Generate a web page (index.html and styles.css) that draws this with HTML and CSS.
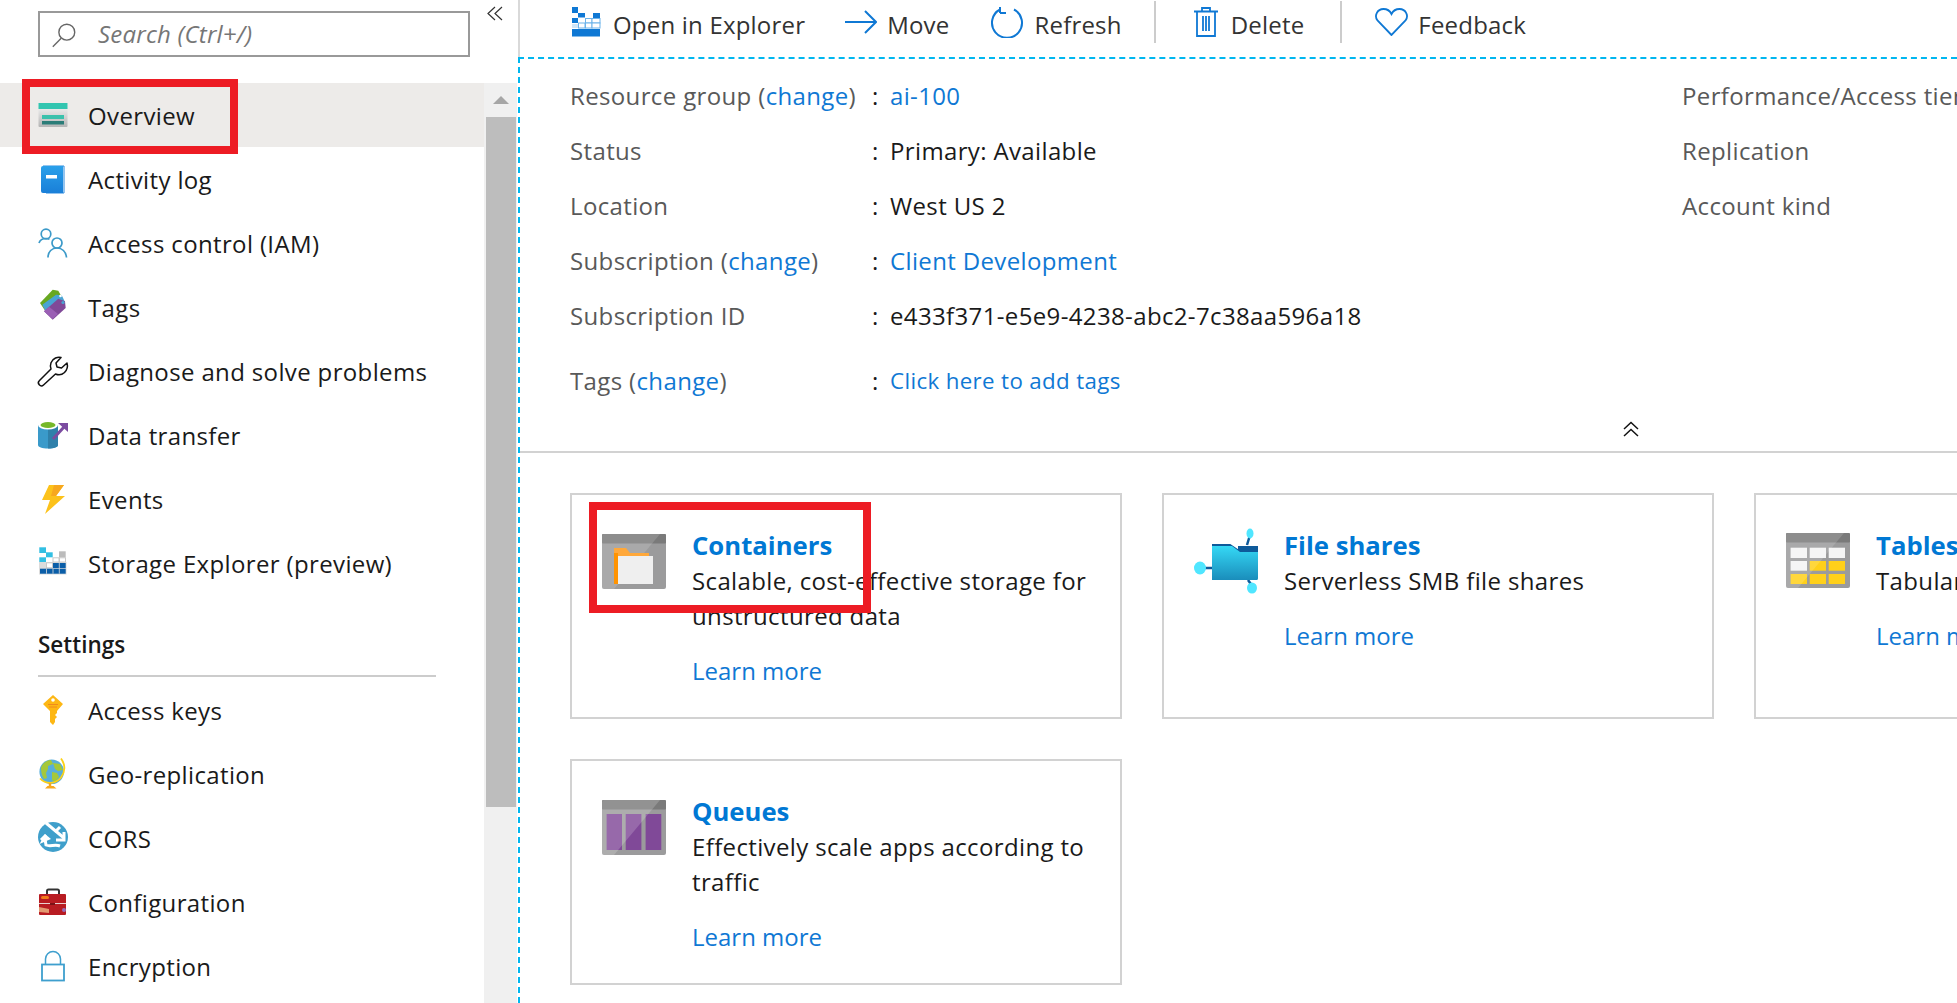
FILE: index.html
```html
<!DOCTYPE html>
<html lang="en">
<head>
<meta charset="utf-8">
<title>Storage account overview</title>
<link rel="stylesheet" href="styles.css">
</head>
<body>
<svg class="defs" width="0" height="0" aria-hidden="true">
  <defs>
    <linearGradient id="gBook" x1="0" y1="0" x2="0" y2="1"><stop offset="0" stop-color="#2aa0ea"/><stop offset="1" stop-color="#1a7fd8"/></linearGradient>
    <linearGradient id="gFolder" x1="0" y1="0" x2="0" y2="1"><stop offset="0" stop-color="#35d8f5"/><stop offset="1" stop-color="#1a8dbb"/></linearGradient>
    <linearGradient id="gOverview" x1="0" y1="0" x2="0" y2="1"><stop offset="0" stop-color="#fafafa"/><stop offset="1" stop-color="#b5b5b5"/></linearGradient>
  </defs>
</svg>
<div class="page">
  <aside class="sidebar">
    <div class="sidebar-top">
      <div class="search">
        <svg class="search-icon" viewBox="0 0 30 30" width="30" height="30"><circle cx="18" cy="12" r="8.5" fill="none" stroke="#666" stroke-width="1.5"/><path d="M12 18.5 3 27.5" stroke="#666" stroke-width="1.5" fill="none"/></svg>
        <span class="search-text">Search (Ctrl+/)</span>
      </div>
      <svg class="collapse" viewBox="0 0 16 16" width="16" height="16"><path d="M8 1 1 7.5 8 14M15 1 8 7.5 15 14" fill="none" stroke="#333" stroke-width="1.2"/></svg>
    </div>
    <div class="sidebar-body">
      <nav class="nav">
        <a class="nav-item selected">
          <span class="highlight-nav"></span>
          <svg class="nav-icon" viewBox="0 0 30 30"><rect x="0.5" y="3" width="29" height="24" rx="1" fill="url(#gOverview)"/><rect x="0.5" y="3" width="29" height="6" fill="#32c5b0"/><rect x="4" y="15" width="22" height="4" fill="#3ac1ac"/><rect x="4" y="21" width="22" height="3.5" fill="#2b7d78"/></svg>
          <span>Overview</span>
        </a>
        <a class="nav-item">
          <svg class="nav-icon" viewBox="0 0 30 30"><path d="M5 2h21v27H8" fill="none" stroke="#2a8adf" stroke-width="1"/><path d="M3 4a2 2 0 0 1 2-2h20v27H5a2 2 0 0 1-2-2z" fill="url(#gBook)"/><rect x="8" y="11" width="11" height="3.5" fill="#fff"/></svg>
          <span>Activity log</span>
        </a>
        <a class="nav-item">
          <svg class="nav-icon" viewBox="0 0 30 30"><g fill="none" stroke="#3c9ac9" stroke-width="1.7"><circle cx="8" cy="6" r="4.8"/><circle cx="19" cy="15" r="5"/><path d="M1 15c1-3 3-4.500 7-4.500 1.500 0 2.500.3 3.500.8"/><path d="M10 29.500c0-6 4-9.500 9-9.500s9 3.500 9.500 9.500"/></g></svg>
          <span>Access control (IAM)</span>
        </a>
        <a class="nav-item">
          <svg class="nav-icon" viewBox="0 0 30 30"><path d="M2 11 14.700-2.300l5.600 1 4 7L8 20z" fill="#68a820"/><path d="M4.300 12.700 18 2.700l5.700.6L27 10 9 22z" fill="#49a4d4"/><path d="M6 19.300 20.300 6.700l6.700 2.600.7 6.700-13 11.700z" fill="#804998"/><path d="M6 19.300 14.700 27 20 22 11 14.800z" fill="#9a5fb4"/><circle cx="25" cy="10.500" r="1.600" fill="#49a4d4"/><circle cx="22.500" cy="4" r="1.300" fill="#fff"/></svg>
          <span>Tags</span>
        </a>
        <a class="nav-item">
          <svg class="nav-icon" viewBox="0 0 30 30"><path d="M1.500 24.500 13 13c-1.500-4 0-9 4.500-11 2-.9 4-1 5.500-.5l-5 5.500 1 4 4.500 1L29 7c1 3.500 0 7-2.500 9.500-2.500 2.300-6 2.800-9 1.500L5.500 29a2.800 2.800 0 0 1-4-4.500z" fill="none" stroke="#111" stroke-width="1.500" stroke-linejoin="round"/></svg>
          <span>Diagnose and solve problems</span>
        </a>
        <a class="nav-item">
          <svg class="nav-icon" viewBox="0 0 30 30"><path d="M0 5v20c0 2 4 3.500 10 3.500s10-1.500 10-3.500V5z" fill="#3a9aca"/><path d="M10 8v20.500c6 0 10-1.500 10-3.500V5z" fill="#2f80aa"/><ellipse cx="10" cy="5" rx="10" ry="4.500" fill="#fff"/><ellipse cx="10" cy="5" rx="7.500" ry="3" fill="#76b82a"/><path d="M15 19 26 7" stroke="#7b4ba0" stroke-width="3" fill="none"/><path d="M20 3h10v9z" fill="#7b4ba0"/></svg>
          <span>Data transfer</span>
        </a>
        <a class="nav-item">
          <svg class="nav-icon" viewBox="0 0 30 30"><path d="M11 1h15l-8 11h9L7 30l5-14H4z" fill="#fcc21b"/><path d="M16 1h10l-8 11h-5z" fill="#f7a81e"/></svg>
          <span>Events</span>
        </a>
        <a class="nav-item">
          <svg class="nav-icon" viewBox="0 0 30 30"><rect x="1" y="14" width="27.500" height="12.500" fill="#dcdcdc"/><g fill="#fff" stroke="#c8c8c8" stroke-width="1"><rect x="15" y="9.800" width="6" height="4.200"/><rect x="21.500" y="9.800" width="6" height="4.200"/><rect x="8.500" y="14.800" width="6" height="5"/></g><rect x="1.300" y="-.7" width="6.700" height="5.700" fill="#32bfe3"/><rect x="8" y="4.300" width="6.700" height="5" fill="#32bfe3"/><rect x="1.300" y="9.300" width="6.700" height="4.700" fill="#32bfe3"/><rect x="21" y="3.300" width="6.700" height="6" fill="#bcbcbc"/><rect x="15" y="15" width="12.700" height="5" fill="#0b5ea8"/><rect x="2" y="20.700" width="25.700" height="5" fill="#0b5ea8"/><path d="M8.500 20.700v5M15 20.700v5M21.300 15v10.700" stroke="#dcdcdc" stroke-width=".8"/></svg>
          <span>Storage Explorer (preview)</span>
        </a>
      </nav>
      <h2 class="nav-heading">Settings</h2>
      <nav class="nav">
        <a class="nav-item">
          <svg class="nav-icon" viewBox="0 0 30 30"><path d="M15 0 25 9l-6 7v2l-2 2 2 2-2 2v3l-2 3-3-3V16L5 9z" fill="#fdb714"/><circle cx="15" cy="5" r="1.800" fill="#fff"/><path d="M10 9.500h10M11 12h8" stroke="#f08a1c" stroke-width="1"/></svg>
          <span>Access keys</span>
        </a>
        <a class="nav-item">
          <svg class="nav-icon" viewBox="0 0 30 30"><circle cx="13.700" cy="12.700" r="12.300" fill="#58aedb"/><path d="M3 9c1-4 5-8 10-8l2 4-5 2v3l-2 4 1 5-3 1c-2-3-3-7-3-11zM15 4l7 1 3 6-5 1-3-2zM14 13l5 1 2 4-4 5-3-2z" fill="#a5c83a"/><path d="M23 -.5C27 5 27.500 12 23 18.500 18 25 8 26 2 19.500" fill="none" stroke="#fcd116" stroke-width="1.800"/><path d="M12 24v3" stroke="#f7a81e" stroke-width="2.500"/><path d="M7 29.500 9.500 27h6l3 2.500z" fill="#f7a81e"/></svg>
          <span>Geo-replication</span>
        </a>
        <a class="nav-item">
          <svg class="nav-icon" viewBox="0 0 30 30"><circle cx="15" cy="14" r="15" fill="#3f9fcb"/><g fill="none" stroke="#fff" stroke-width="3"><path d="M8 0 26 15"/><path d="M22 4 17 9"/><path d="M18 17h8V9"/><path d="M22 23c-5-2-10 1-14-1l-1-6"/><path d="M3 17l5-5"/></g><path d="M1.500 21 7 11l6 5z" fill="#fff"/></svg>
          <span>CORS</span>
        </a>
        <a class="nav-item">
          <svg class="nav-icon" viewBox="0 0 30 30"><path d="M9 8V4a1.500 1.500 0 0 1 1.500-1.500h9A1.500 1.500 0 0 1 21 4v4" fill="none" stroke="#333" stroke-width="2"/><rect x="1" y="7" width="27" height="21" rx="1" fill="#b81c22"/><rect x="1" y="16" width="27" height="1" fill="#e8d0d0"/><rect x="3" y="9" width="8" height="3" rx="1.500" fill="#f27b1a"/><path d="M1 20l10 2v4l-10-1z" fill="#e39a72"/><circle cx="26" cy="23" r="2" fill="#9a6cb8"/><rect x="12" y="16" width="5" height="2" fill="#7c1216"/></svg>
          <span>Configuration</span>
        </a>
        <a class="nav-item">
          <svg class="nav-icon" viewBox="0 0 30 30"><path d="M7.500 13V8a7.500 7.500 0 0 1 15 0v5" fill="none" stroke="#3e9fce" stroke-width="1.500"/><rect x="4" y="13.500" width="22" height="16" fill="#fff" stroke="#3e9fce" stroke-width="1.800"/></svg>
          <span>Encryption</span>
        </a>
      </nav>
    </div>
    <div class="scrollbar">
      <button class="scroll-up" type="button" aria-label="Scroll up"><span class="scroll-arrow"></span></button>
      <div class="scroll-thumb"></div>
    </div>
  </aside>

  <main class="main">
    <div class="toolbar">
      <a class="tool tool-open">
        <svg class="tool-icon" width="31" height="30" viewBox="0 0 31 30"><g fill="#0f78d4"><rect x="1" y="0" width="6" height="6"/><rect x="7" y="6" width="7" height="4.500"/><rect x="1" y="11" width="6" height="5"/><rect x="22" y="6" width="7" height="5"/><rect x="1" y="22" width="28" height="7.500"/></g><g fill="#fff" stroke="#6db3ea" stroke-width="1"><rect x="14.500" y="11.500" width="6.500" height="4.500"/><rect x="21" y="11.500" width="8" height="4.500"/><rect x="7.500" y="16" width="6.500" height="5"/><rect x="14.500" y="16" width="6.500" height="5"/><rect x="21" y="16" width="8" height="5"/></g><rect x="1" y="17" width="6" height="4" fill="#cfe5f7"/></svg>
        <span>Open in Explorer</span>
      </a>
      <a class="tool tool-move">
        <svg class="tool-icon" width="32" height="30" viewBox="0 0 32 30"><path d="M0 15h30M20 4l11 11-11 11" fill="none" stroke="#0f78d4" stroke-width="2"/></svg>
        <span>Move</span>
      </a>
      <a class="tool tool-refresh">
        <svg class="tool-icon" width="34" height="32" viewBox="0 0 34 32"><path d="M10 3.500A15 15 0 1 0 24 3.500" fill="none" stroke="#0f78d4" stroke-width="2"/><path d="M10 1v6M10 7h6" fill="none" stroke="#0f78d4" stroke-width="2"/></svg>
        <span>Refresh</span>
      </a>
      <span class="tool-sep"></span>
      <a class="tool tool-delete">
        <svg class="tool-icon" width="24" height="30" viewBox="0 0 24 30"><path d="M0 4.500h24M8 4V1h8v3M3 5v24h18V5M9 9v15M12 9v15M15 9v15" fill="none" stroke="#0f78d4" stroke-width="1.800"/></svg>
        <span>Delete</span>
      </a>
      <span class="tool-sep"></span>
      <a class="tool tool-feedback">
        <svg class="tool-icon" width="33" height="28" viewBox="0 0 33 28"><path d="M16.500 27 2.500 12.500C-1 8 2 1 8.500 1c3.500 0 6.500 2 8 5 1.500-3 4.500-5 8-5C31 1 34 8 30.500 12.500z" fill="none" stroke="#0f78d4" stroke-width="1.800"/></svg>
        <span>Feedback</span>
      </a>
    </div>

    <div class="content">
      <section class="essentials">
        <div class="essentials-cols">
          <dl class="props">
            <dt class="prop-label">Resource group (<a class="link">change</a>)</dt><dd class="prop-colon">:</dd><dd class="prop-value"><a class="link">ai-100</a></dd>
            <dt class="prop-label">Status</dt><dd class="prop-colon">:</dd><dd class="prop-value">Primary: Available</dd>
            <dt class="prop-label">Location</dt><dd class="prop-colon">:</dd><dd class="prop-value">West US 2</dd>
            <dt class="prop-label">Subscription (<a class="link">change</a>)</dt><dd class="prop-colon">:</dd><dd class="prop-value"><a class="link">Client Development</a></dd>
            <dt class="prop-label">Subscription ID</dt><dd class="prop-colon">:</dd><dd class="prop-value">e433f371-e5e9-4238-abc2-7c38aa596a18</dd>
            <dt class="prop-label prop-tags">Tags (<a class="link">change</a>)</dt><dd class="prop-colon prop-tags">:</dd><dd class="prop-value prop-tags prop-small"><a class="link">Click here to add tags</a></dd>
          </dl>
          <ul class="props-right">
            <li>Performance/Access tier</li>
            <li>Replication</li>
            <li>Account kind</li>
          </ul>
        </div>
        <div class="collapse-row">
          <svg width="16" height="16" viewBox="0 0 16 16"><path d="M1 8 8 1.500 15 8M1 15 8 8.500 15 15" fill="none" stroke="#111" stroke-width="1.500"/></svg>
        </div>
      </section>

      <section class="cards">
        <article class="card">
          <span class="highlight-card"></span>
          <svg class="card-icon" viewBox="0 0 64 64"><rect y="5" width="64" height="55" rx="2" fill="#9b9b9c"/><rect y="5" width="64" height="9.500" rx="1" fill="#7a7a7a"/><path d="M0 58V7a2 2 0 0 1 2-2h56L12 60H2a2 2 0 0 1-2-2z" fill="#fff" opacity=".15"/><path d="M12 19h12l4 5h19v31H12z" fill="#ffa83a"/><path d="M12 24h4v31h-4z" fill="#ff9300"/><rect x="16" y="27" width="35" height="28" fill="#efefef"/></svg>
          <div class="card-body">
            <h3 class="card-title">Containers</h3>
            <p class="card-desc">Scalable, cost-effective storage for unstructured data</p>
            <a class="link card-link">Learn more</a>
          </div>
        </article>
        <article class="card">
          <svg class="card-icon" viewBox="0 0 64 64"><path d="M56 6 53 16M10 39h8M54 51l5 7" stroke="#0e5a9a" stroke-width="2.500" fill="none"/><ellipse cx="56" cy="4.500" rx="3.500" ry="5" fill="#50e6ff"/><ellipse cx="6" cy="39" rx="6" ry="6.500" fill="#50e6ff"/><ellipse cx="58" cy="59" rx="5" ry="5.500" fill="#50e6ff"/><path d="M44 17h20v10H44z" fill="#0e5a9a"/><path d="M19 18v-2h17l12 8" fill="none" stroke="#0e5a9a" stroke-width="2"/><path d="M18 17h20l8 6h18v26.500a1.500 1.500 0 0 1-1.500 1.500H18z" fill="url(#gFolder)"/></svg>
          <div class="card-body">
            <h3 class="card-title">File shares</h3>
            <p class="card-desc">Serverless SMB file shares</p>
            <a class="link card-link">Learn more</a>
          </div>
        </article>
        <article class="card">
          <svg class="card-icon" viewBox="0 0 64 64"><rect y="4" width="64" height="55" rx="2" fill="#9b9b9c"/><rect y="4" width="64" height="9.500" rx="1" fill="#7a7a7a"/><g fill="#f4f4f4"><rect x="4.600" y="18.700" width="16.400" height="10.300"/><rect x="23.700" y="18.700" width="16.300" height="10.300"/><rect x="42.700" y="18.700" width="16.300" height="10.300"/><rect x="4.600" y="32" width="16.400" height="9.700"/></g><g fill="#ffd01a"><rect x="23.700" y="32" width="16.300" height="9.700"/><rect x="42.700" y="32" width="16.300" height="9.700"/><rect x="4.600" y="45" width="16.400" height="10"/><rect x="23.700" y="45" width="16.300" height="10"/><rect x="42.700" y="45" width="16.300" height="10"/></g><path d="M0 57V6a2 2 0 0 1 2-2h56L12 59H2a2 2 0 0 1-2-2z" fill="#fff" opacity=".15"/></svg>
          <div class="card-body">
            <h3 class="card-title">Tables</h3>
            <p class="card-desc">Tabular data storage</p>
            <a class="link card-link">Learn more</a>
          </div>
        </article>
        <article class="card">
          <svg class="card-icon" viewBox="0 0 64 64"><rect y="5" width="64" height="55" rx="2" fill="#9b9b9c"/><rect y="5" width="64" height="9.500" rx="1" fill="#7a7a7a"/><g fill="#804998"><rect x="4.600" y="19" width="15.400" height="36"/><rect x="23.700" y="19" width="15.700" height="36"/><rect x="43.600" y="19" width="15.700" height="36"/></g><path d="M0 58V7a2 2 0 0 1 2-2h56L12 60H2a2 2 0 0 1-2-2z" fill="#fff" opacity=".18"/></svg>
          <div class="card-body">
            <h3 class="card-title">Queues</h3>
            <p class="card-desc">Effectively scale apps according to traffic</p>
            <a class="link card-link">Learn more</a>
          </div>
        </article>
      </section>
    </div>
  </main>
</div>
</body>
</html>
```

FILE: styles.css
```css
* { box-sizing: border-box; }
html, body { margin: 0; height: 100%; overflow: hidden; background: #fff; }
body { font-family: "Open Sans", "Noto Sans", sans-serif; font-size: 24px; letter-spacing: 0.36px; color: #1a1a1a; }
.defs { position: absolute; }
.page { display: flex; height: 1003px; width: 1957px; overflow: hidden; }

.sidebar { position: relative; flex: 0 0 518px; display: flex; flex-direction: column; }
.sidebar-top { flex: 0 0 83px; display: flex; align-items: flex-start; padding: 11px 0 0 38px; }
.search { width: 432px; height: 46px; border: 2px solid #999; display: flex; align-items: center; padding-left: 10px; }
.search-icon { flex: none; width: 28px; height: 28px; margin-top: 2px; }
.search-text { margin-left: 20px; padding-bottom: 2px; font-style: italic; letter-spacing: 0.2px; color: #767676; }
.collapse { margin: -5px 0 0 17px; }

.sidebar-body { width: 484px; flex: 1; min-height: 0; }
.nav { display: flex; flex-direction: column; }
.nav-item { position: relative; height: 64px; display: flex; align-items: center; padding-left: 38px; gap: 20px; }
.nav-item.selected { background: #edebe9; }
.nav-icon { width: 30px; height: 30px; flex: none; overflow: visible; }
.nav-heading { margin: 30px 0 0 38px; font-size: 22.5px; font-weight: 600; letter-spacing: 0; height: 52px; line-height: 40px; width: 398px; border-bottom: 2px solid #ccc; }
.nav-heading + .nav { margin-top: 1px; }

.highlight-nav { position: absolute; left: 22px; top: -4px; width: 216px; height: 75px; border: 8px solid #ed1c24; }

.scrollbar { position: absolute; left: 484px; top: 83px; bottom: 0; width: 33px; background: #f0f0f0; }
.scroll-up { display: flex; justify-content: center; align-items: center; width: 100%; height: 34px; padding: 0; border: 0; background: none; }
.scroll-arrow { width: 0; height: 0; border-left: 8px solid transparent; border-right: 8px solid transparent; border-bottom: 8px solid #a6a6a6; }
.scroll-thumb { margin-left: 2px; width: 30px; height: 690px; background: #bdbdbd; }

.main { flex: 1; min-width: 0; display: flex; flex-direction: column; }
.toolbar { flex: 0 0 57px; border-left: 2px solid #d9d9d9; display: flex; align-items: flex-start; padding-left: 51px; color: #333; letter-spacing: 0.2px; }
.tool { display: flex; align-items: flex-start; }
.tool span { line-height: 49px; }
.tool-icon { flex: none; }
.tool-open .tool-icon { margin: 7px 11px 0 0; }
.tool-move { margin-left: 40px; }
.tool-move .tool-icon { margin: 7px 10px 0 0; }
.tool-refresh { margin-left: 41px; }
.tool-refresh .tool-icon { margin: 6px 10px 0 0; }
.tool-sep { width: 2px; height: 42px; margin: 1px 0 0 32px; background: #ccc; }
.tool-delete { margin-left: 38px; }
.tool-delete .tool-icon { margin: 7px 13px 0 0; }
.tool-delete + .tool-sep { margin-left: 36px; }
.tool-feedback { margin-left: 33px; }
.tool-feedback .tool-icon { margin: 8px 10px 0 0; }

.content { flex: 1; min-height: 0; border-top: 2px dashed #00b7f0; border-left: 2px dashed #00b7f0; }
.essentials { height: 394px; border-bottom: 2px solid #d2d2d2; padding-left: 50px; }
.essentials-cols { display: flex; padding-top: 9px; height: 362px; }
.props { margin: 0; width: 1112px; flex: none; display: grid; grid-template-columns: 302px 18px 1fr; grid-auto-rows: 55px; align-items: center; }
.prop-label { color: #595959; }
.prop-colon, .prop-value { margin: 0; }
.prop-tags { padding-top: 20px; }
.prop-small { font-size: 22.3px; }
.props-right { list-style: none; margin: 0; padding: 0; color: #595959; }
.props-right li { height: 55px; line-height: 55px; white-space: nowrap; }
.link { color: #0f78d4; }
.collapse-row { margin-left: 1053px; display: flex; height: 16px; }

.cards { display: grid; grid-template-columns: repeat(3, 552px); grid-auto-rows: 226px; gap: 40px; padding: 40px 0 0 50px; }
.card { position: relative; display: flex; gap: 26px; border: 2px solid #d2d2d2; padding: 33px 0 0 30px; }
.card-icon { width: 64px; height: 64px; flex: none; margin-top: 1px; overflow: visible; }
.card-body { flex: 1; min-width: 0; padding-right: 24px; line-height: 35px; }
.card-title { margin: 0; font-size: 25.7px; font-weight: 700; letter-spacing: 0; color: #0078d4; }
.card-desc { margin: 0 0 20px; }
.card-link { display: block; letter-spacing: 0; }
.highlight-card { position: absolute; left: 17px; top: 7px; width: 282px; height: 111px; border: 8px solid #ed1c24; z-index: 1; }
```
